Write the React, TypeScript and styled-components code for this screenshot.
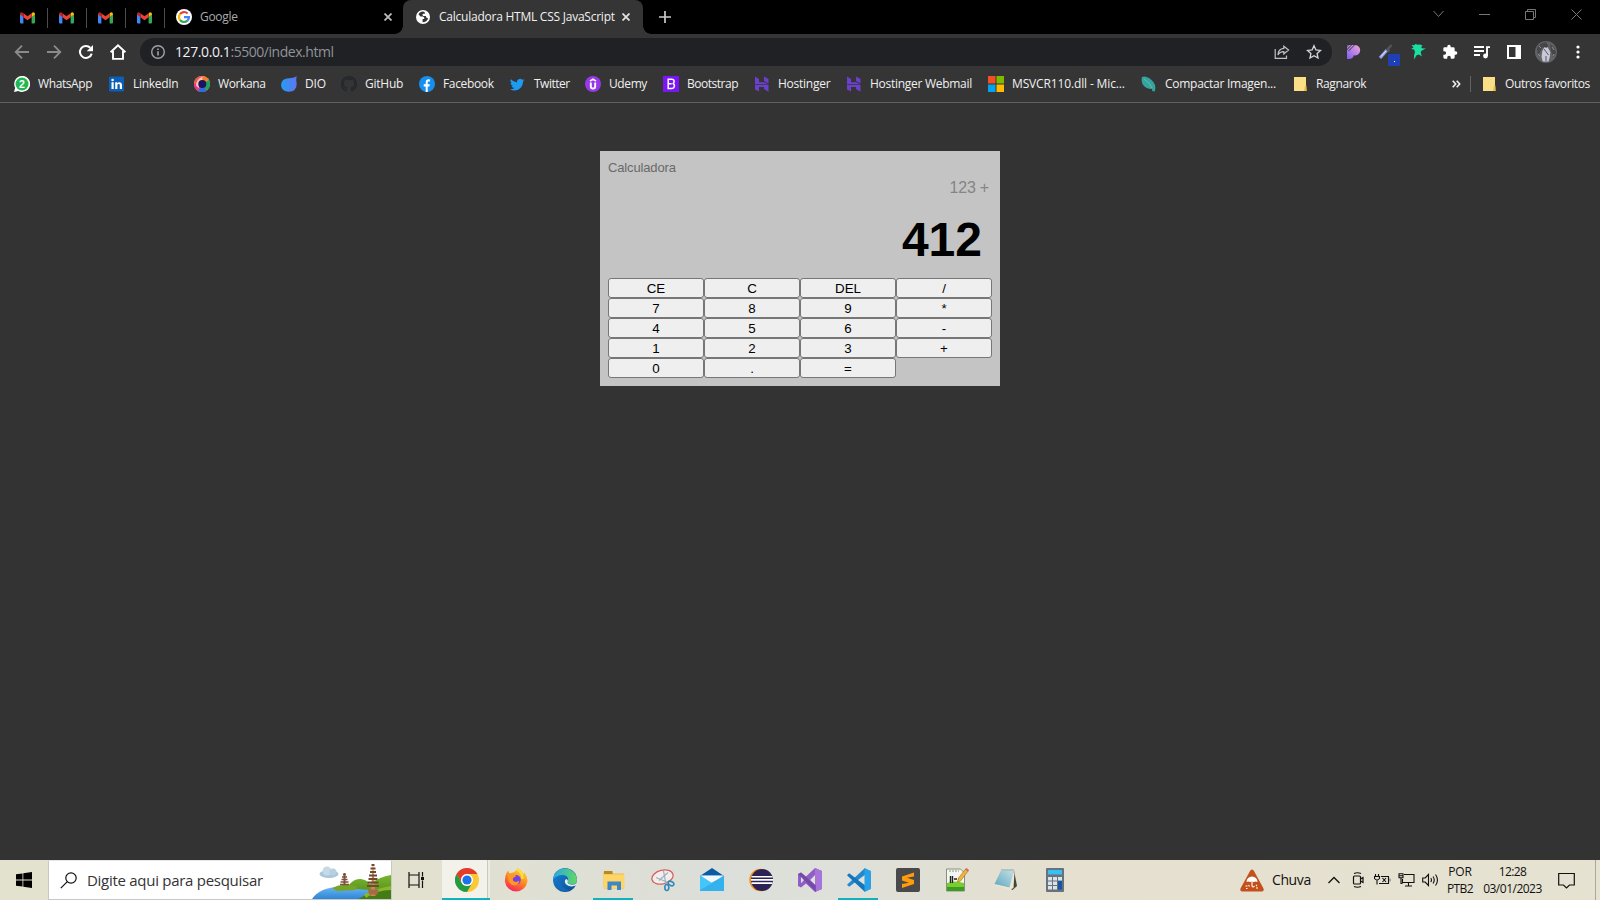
import React from "react";
import styled, { createGlobalStyle } from "styled-components";

const UI = `"Open Sans", "Noto Sans", sans-serif`;

const GlobalStyle = createGlobalStyle`
  * { box-sizing: border-box; }
  html, body { margin: 0; padding: 0; overflow: hidden; background: #333333; }
  svg { display: block; flex: none; }
`;

const Screen = styled.div`
  width: 1600px;
  height: 900px;
  display: flex;
  flex-direction: column;
  overflow: hidden;
  font-family: ${UI};
`;

/* ---------- browser: tabs ---------- */
const TabStrip = styled.div`
  height: 34px;
  flex: none;
  display: flex;
  background: #000;
`;
const PinnedTabs = styled.div`
  display: flex;
  padding-left: 9px;
`;
const PinnedTab = styled.div`
  width: 39px;
  height: 20px;
  margin-top: 8px;
  padding: 0 1px 1px 0;
  display: flex;
  align-items: center;
  justify-content: center;
  border-right: 1px solid #4c4c4c;
`;
const Tab = styled.div<{ $width: number; $active?: boolean }>`
  width: ${p => p.$width}px;
  height: 34px;
  display: flex;
  align-items: center;
  position: relative;
  padding-left: ${p => (p.$active ? 12 : 11)}px;
  color: ${p => (p.$active ? "#f1f1f1" : "#a9abae")};
  background: ${p => (p.$active ? "#353535" : "transparent")};
  border-radius: 8px 8px 0 0;
  &::before, &::after {
    content: "";
    display: ${p => (p.$active ? "block" : "none")};
    position: absolute;
    bottom: 0;
    width: 8px;
    height: 8px;
  }
  &::before { left: -8px; background: radial-gradient(circle at 0 0, transparent 7.5px, #353535 8px); }
  &::after { right: -8px; background: radial-gradient(circle at 100% 0, transparent 7.5px, #353535 8px); }
`;
const Label = styled.span<{ $ls?: number; $size?: number }>`
  font-size: ${p => p.$size ?? 12}px;
  letter-spacing: ${p => p.$ls ?? 0}px;
  line-height: 16px;
  white-space: nowrap;
`;
const TabTitle = styled(Label)`
  flex: 1;
  margin-left: 8px;
`;
const TabClose = styled.div<{ $width?: number }>`
  width: ${p => p.$width ?? 31}px;
  padding-right: ${p => (p.$width ? 6 : 0)}px;
  display: flex;
  justify-content: center;
`;
const NewTab = styled.div`
  width: 44px;
  display: flex;
  align-items: center;
  justify-content: center;
`;
const WindowControls = styled.div`
  margin-left: auto;
  padding-right: 1px;
  display: flex;
`;
const WindowButton = styled.div`
  width: 46px;
  height: 28px;
  display: flex;
  align-items: center;
  justify-content: center;
`;

/* ---------- browser: toolbar ---------- */
const Toolbar = styled.div`
  height: 36px;
  flex: none;
  display: flex;
  align-items: center;
  padding: 0 6px;
  background: #353535;
`;
const ToolButton = styled.div<{ $width?: number }>`
  width: ${p => p.$width ?? 32}px;
  height: 32px;
  display: flex;
  align-items: center;
  justify-content: center;
  position: relative;
`;
const AddressBar = styled.div`
  width: 1192px;
  height: 28px;
  margin: 0 6px;
  border-radius: 14px;
  background: #202124;
  display: flex;
  align-items: center;
  padding: 0 2px 0 10px;
`;
const Host = styled(Label)`
  margin-left: 9px;
  color: #f0f0f0;
`;
const Path = styled(Label)`
  flex: 1;
  color: #919498;
`;
const BlueBadge = styled.div`
  position: absolute;
  right: 2px;
  bottom: 2px;
  width: 12px;
  height: 12px;
  border-radius: 1px;
  background: #1f3fb4;
  display: flex;
  align-items: center;
  justify-content: center;
  &::after { content: ""; width: 1px; height: 1px; background: #fff; margin-top: 3px; }
`;

/* ---------- browser: bookmarks ---------- */
const BookmarkBar = styled.div`
  height: 33px;
  flex: none;
  display: flex;
  padding: 0 0 3px 14px;
  background: #353535;
  border-bottom: 1px solid #606160;
  color: #f0f0f0;
`;
const Bookmark = styled.div<{ $width: number }>`
  width: ${p => p.$width}px;
  height: 28px;
  display: flex;
  align-items: center;
  gap: 8px;
`;
const BarDivider = styled.div`
  width: 1px;
  height: 16px;
  margin: 6px 11px 0 6px;
  background: #606366;
`;
const Overflow = styled.div`
  width: 16px;
  height: 28px;
  margin-left: auto;
  display: flex;
  align-items: center;
  justify-content: center;
`;

/* ---------- calculator ---------- */
const Page = styled.main`
  flex: 1;
  display: flex;
  justify-content: center;
  align-items: flex-start;
  padding-top: 48px;
  background: #333333;
`;
const Calculator = styled.section`
  width: 400px;
  height: 235px;
  padding: 8px;
  background: #c4c4c4;
  font-family: "Liberation Sans", Arial, sans-serif;
`;
const CalcTitle = styled.div`
  height: 17px;
  line-height: 18px;
  font-size: 13px;
  letter-spacing: -0.15px;
  color: #6a6a6a;
`;
const Previous = styled.div`
  height: 24px;
  line-height: 24px;
  padding-right: 3px;
  text-align: right;
  font-size: 16px;
  letter-spacing: -0.2px;
  color: #858585;
`;
const Current = styled.div`
  height: 78px;
  line-height: 79px;
  padding-right: 10px;
  text-align: right;
  font-size: 48px;
  font-weight: 700;
  color: #000;
`;
const Keys = styled.div`
  display: grid;
  grid-template-columns: repeat(4, 96px);
  grid-auto-rows: 20px;
`;
const Key = styled.button`
  margin: 0;
  padding: 1px 0 0;
  border: 1px solid #767676;
  border-radius: 3px;
  background: #efefef;
  color: #000;
  font: 13.333px/17px "Liberation Sans", Arial, sans-serif;
`;

/* ---------- taskbar ---------- */
const Taskbar = styled.footer`
  height: 40px;
  flex: none;
  display: flex;
  background: linear-gradient(90deg, #e3e2cf 0, #e2e1d0 420px, #dcdfd9 700px, #dee0da 830px, #e5e0cf 1060px, #e6e2d1 1600px);
  color: #111;
`;
const Start = styled.div`
  width: 48px;
  display: flex;
  align-items: center;
  justify-content: center;
`;
const Search = styled.div`
  width: 344px;
  display: flex;
  align-items: center;
  padding-left: 11px;
  background: #fff;
  border: 1px solid #c9c9c4;
  border-top-color: #e6e6e2;
`;
const SearchText = styled(Label)`
  flex: 1;
  margin-left: 10px;
  color: #333;
`;
const TaskView = styled.div`
  width: 50px;
  padding-right: 1px;
  display: flex;
  align-items: center;
  justify-content: center;
`;
const AppTile = styled.div<{ $running?: boolean; $focused?: boolean }>`
  width: 49px;
  height: 40px;
  display: flex;
  align-items: center;
  justify-content: center;
  position: relative;
  background: ${p => (p.$focused ? "linear-gradient(90deg, #f3f2ea 45px, #c9c9c0 45px, #c9c9c0 46px, #eeece2 46px, #eeece2 48px, transparent 48px)" : "none")};
  &::after {
    content: "";
    position: absolute;
    bottom: 0;
    left: ${p => (p.$focused ? 0 : 4)}px;
    width: ${p => (p.$focused ? 48 : 40)}px;
    height: 2px;
    background: ${p => (p.$running ? "#13b1bb" : "transparent")};
  }
`;
const Tray = styled.div`
  margin-left: auto;
  display: flex;
  align-items: center;
`;
const Weather = styled.div`
  display: flex;
  align-items: center;
  gap: 8px;
  width: 82px;
`;
const TrayIcon = styled.div`
  width: 24px;
  display: flex;
  justify-content: center;
`;
const Notifications = styled.div`
  width: 48px;
  padding-left: 11px;
`;
const TwoLines = styled.div<{ $width: number }>`
  width: ${p => p.$width}px;
  display: flex;
  flex-direction: column;
  align-items: center;
  gap: 1px;
`;
const ShowDesktop = styled.div`
  width: 5px;
  height: 40px;
  border-left: 1px solid #aaa89c;
`;

/* ---------- drawings ---------- */
const Gmail = () => (
  <svg width="15" height="12" viewBox="0 0 15 12">
    <path d="M0 2v8.6Q0 11.5 1 11.5h2.4V4.7L1.5 1Z" fill="#4285f4" />
    <path d="M11.6 4.7v6.8H14q1 0 1-.9V2l-1.5-1Z" fill="#34a853" />
    <path d="M11.6 1.2v3.6L15 2.4Q15 .2 13 .3Z" fill="#fbbc04" />
    <path d="M3.4 1.2v4l4.1 3.1 4.1-3.1v-4L7.5 4.3Z" fill="#ea4335" />
    <path d="M0 2.4 3.4 5V1.2L2 .3Q0 .2 0 2.4" fill="#c5221f" />
  </svg>
);
const GoogleG = () => (
  <svg width="16" height="16" viewBox="0 0 16 16">
    <circle cx="8" cy="8" r="8" fill="#fff" />
    <g fill="none" strokeWidth="2.2">
      <path d="M4 5.1A5 5 0 0 1 11.6 4.5" stroke="#ea4335" />
      <path d="M4 11A5 5 0 0 1 4 5.1" stroke="#fbbc05" />
      <path d="M11.5 11.6A5 5 0 0 1 4 11" stroke="#34a853" />
      <path d="M8 8.1h5A5 5 0 0 1 11.5 11.6" stroke="#4285f4" />
    </g>
  </svg>
);
const Cross = ({ color }: { color: string }) => (
  <svg width="8" height="8" viewBox="0 0 8 8"><path d="M.5.5l7 7M7.5.5l-7 7" stroke={color} strokeWidth="1.8" /></svg>
);
const Globe = () => (
  <svg width="16" height="16" viewBox="0 0 16 16">
    <circle cx="8" cy="8" r="7" fill="#fff" />
    <path d="M8 2.600c-1.900.1-3.600 1.100-4.500 2.700L5.500 7.400h2.400l1.300 1.200v1.300H7.600v3.400c2.500.1 4.800-1.400 5.500-3.800L11 8.200V6.900H8.300L7.200 5.700l1.100-1h1.500L9.800 3.200Z" fill="#353535" />
  </svg>
);
const Back = ({ flip }: { flip?: boolean }) => (
  <svg width="16" height="16" viewBox="0 0 16 16" fill="none" stroke="#8b8b8b" strokeWidth="1.8" transform={flip ? "scale(-1 1)" : undefined}>
    <path d="M15 8H2.300M8 1.700 1.700 8 8 14.300" />
  </svg>
);
const Reload = () => (
  <svg width="16" height="16" viewBox="0 0 16 16">
    <path d="M13.700 9.600A6 6 0 1 1 12.300 3.800" fill="none" stroke="#fff" strokeWidth="2" />
    <path d="M15 .9v6.300H8.700Z" fill="#fff" />
  </svg>
);
const Home = () => (
  <svg width="18" height="18" viewBox="0 0 18 18" fill="none" stroke="#fff" strokeWidth="1.900">
    <path d="M1.600 9.200 9 2.200l7.400 7M4 8v7.900h10V8" />
  </svg>
);
const Info = () => (
  <svg width="16" height="16" viewBox="0 0 16 16"><circle cx="8" cy="8" r="6.300" fill="none" stroke="#a0a3a7" strokeWidth="1.400" /><path d="M7.200 7.200h1.600v4.200H7.200zM7.200 4.500h1.600v1.600H7.200z" fill="#a0a3a7" /></svg>
);
const Share = () => (
  <svg width="16" height="16" viewBox="0 0 16 16" fill="none" stroke="#bfc2c5" strokeWidth="1.200">
    <path d="M1.200 5v9.300h11.300V11.500" /><path d="M9.800 2.200 14.600 6 9.800 9.900V7.700C7 7.700 5 8.900 4 11c.1-4 2.300-6.300 5.800-6.600Z" />
  </svg>
);
const Star = () => (
  <svg width="16" height="16" viewBox="0 0 16 16" fill="none" stroke="#d5d7d9" strokeWidth="1.300">
    <path d="m8 1.700 1.900 4.200 4.600.5-3.400 3.100.9 4.500L8 11.700 4 14l.9-4.500L1.500 6.400l4.600-.5Z" />
  </svg>
);
const PurpleP = () => (
  <svg width="16" height="16" viewBox="0 0 16 16">
    <defs><linearGradient id="pp" x1="0" y1="1" x2="1" y2="0"><stop offset="0" stopColor="#7d5df5" /><stop offset="1" stopColor="#f2a5d8" /></linearGradient></defs>
    <path d="M1 1h8a6 5.300 0 0 1 0 10.500H7.300V13q-1.500 2-4.300 2H1Z" fill="url(#pp)" />
    <path d="M0 6.500 6 .5M2.500 7 9 .5M0 3.500 3 .5" stroke="#353535" strokeWidth="1" />
  </svg>
);
const Picker = () => (
  <svg width="16" height="16" viewBox="0 0 16 16">
    <path d="M2 14 9 6" stroke="#8ca1e8" strokeWidth="3.200" /><path d="M3 12.500 8 7" stroke="#dfe5ff" strokeWidth="1" /><path d="m8.500 4.500 3 3M9.500 5.500 13.500 1" stroke="#52565c" strokeWidth="2.500" />
  </svg>
);
const GreenBird = () => (
  <svg width="16" height="18" viewBox="0 0 16 18">
    <path d="M1.500 2 4 2.300 5.500 1l2.500.800 2-.300 2.500 1L11.300 4l.5 1.300 4 .200-3.800 2-1.300 1.200 1 4.800-2.700-2-2.500.800-1.500 2.700-.800 1.500L4 12.500 5 9 4 6.500 1 6l2.500-1.500Z" fill="#19dfa0" />
  </svg>
);
const Puzzle = () => (
  <svg width="16" height="16" viewBox="0 0 24 24"><path fill="#fff" d="M20.500 11H19V7a2 2 0 0 0-2-2h-4V3.500a2.500 2.500 0 0 0-5 0V5H4a2 2 0 0 0-2 2v3.800h1.500a2.700 2.700 0 0 1 0 5.400H2V20a2 2 0 0 0 2 2h3.800v-1.500a2.700 2.700 0 0 1 5.400 0V22H17a2 2 0 0 0 2-2v-4h1.500a2.500 2.500 0 0 0 0-5Z" /></svg>
);
const Music = () => (
  <svg width="18" height="16" viewBox="0 0 18 16"><path d="M1 3h10M1 7h10M1 11h6" stroke="#fff" strokeWidth="1.800" /><path d="M14 12V3.100h3" fill="none" stroke="#fff" strokeWidth="1.900" /><circle cx="12.500" cy="12" r="2.400" fill="#fff" /></svg>
);
const SidePanel = () => (
  <svg width="14" height="14" viewBox="0 0 14 14"><path fill="#fff" fillRule="evenodd" d="M0 0h14v14H0zM2 2v10h6.500V2z" /></svg>
);
const Avatar = () => (
  <svg width="22" height="22" viewBox="0 0 22 22">
    <circle cx="11" cy="11" r="11" fill="#606266" />
    <path d="M2 7Q6 1 11 1l2 4-6 2-4 8ZM15 3q5 3 6 9l-3 4-2-6Z" fill="#45474b" />
    <path d="M4 5l2 2M17 6l2 3M3 13l2 2M18 15l1-2" stroke="#8f9195" />
    <path d="M9.500 6h3l2.800 5-.5 5-1.300 4.500H7.800L6.500 16l.8-6Z" fill="#c9c7d8" />
    <circle cx="11" cy="5" r="1.800" fill="#4c3d40" />
    <path d="m9 8 4.500 6M11 15v5" stroke="#5d5560" strokeWidth="1" />
  </svg>
);
const Dots = () => (
  <svg width="4" height="16" viewBox="0 0 4 16" fill="#fff"><circle cx="2" cy="3" r="1.600" /><circle cx="2" cy="8" r="1.600" /><circle cx="2" cy="13" r="1.600" /></svg>
);

const I16 = ({ children }: { children: React.ReactNode }) => <svg width="16" height="16" viewBox="0 0 16 16">{children}</svg>;
const GlyphText = styled.text`
  font-family: "Liberation Sans", Arial, sans-serif;
  font-weight: 700;
  text-anchor: middle;
`;
const WhatsApp = () => (
  <I16><path d="M0 16 1.200 11.800A8 8 0 1 1 4.300 14.900Z" fill="#fff" /><circle cx="8" cy="8" r="6.500" fill="#20b850" /><GlyphText x="8" y="11.700" fontSize="10.500" fill="#fff">2</GlyphText></I16>
);
const LinkedIn = () => (
  <I16><rect x="0" y=".5" width="15" height="15" rx="1" fill="#0b5fb5" /><path d="M2.500 6.300h2.200v6.700H2.500zM6.200 6.300h2.100v1c1-1.700 4.700-1.700 4.700 1.700v4h-2.200V9.500c0-2-2.400-1.800-2.400 0V13H6.200z" fill="#fff" /><circle cx="3.600" cy="4" r="1.300" fill="#fff" /></I16>
);
const Workana = () => (
  <I16>
    <circle cx="8" cy="8" r="8" fill="#f9a63c" />
    <path d="M8 0a8 8 0 0 1 7 4L9 6Z" fill="#f57a2e" />
    <path d="M8 8l7-4A8 8 0 0 1 13 14.200Z" fill="#22a05e" />
    <path d="M8 8l5 6.200A8 8 0 0 1 4 15Z" fill="#2d6be0" />
    <path d="M8 8 4 15A8 8 0 0 1 0 8Z" fill="#e8368f" />
    <path d="M0 8A8 8 0 0 1 8 0L7 8Z" fill="#f0584e" />
    <path d="M8.500.5Q2.500 3 2 9.500L4.500 12 8 4.500Z" fill="#fbc3c6" />
    <circle cx="8.300" cy="8" r="4" fill="#1b1459" />
  </I16>
);
const Dio = () => (
  <I16><defs><linearGradient id="dio"><stop offset="0" stopColor="#249df2" /><stop offset="1" stopColor="#6075f0" /></linearGradient></defs><path d="M15.800.3q-1 3-.2 6.500.8 8.400-7.800 8.900Q.500 15.500 0 9q.3-6.500 8-6.800 4.500 0 7.800-1.900" fill="url(#dio)" /></I16>
);
const GitHub = () => (
  <I16><path fill="#25282c" d="M8 0c4.420 0 8 3.580 8 8a8.013 8.013 0 0 1-5.450 7.590c-.4.080-.55-.17-.55-.38 0-.27.010-1.130.010-2.200 0-.75-.25-1.230-.54-1.480 1.780-.2 3.650-.88 3.650-3.950 0-.88-.31-1.590-.82-2.150.080-.2.360-1.020-.080-2.120 0 0-.67-.22-2.200.82-.64-.18-1.320-.27-2-.27-.68 0-1.360.090-2 .27-1.530-1.030-2.200-.82-2.200-.82-.44 1.100-.16 1.920-.080 2.120-.51.560-.82 1.280-.82 2.150 0 3.060 1.860 3.750 3.640 3.950-.23.200-.44.550-.51 1.070-.46.210-1.610.550-2.330-.66-.15-.24-.6-.83-1.230-.82-.67.010-.27.380.010.530.340.190.730.900.820 1.130.160.450.680 1.310 2.690.940 0 .670.010 1.300.010 1.490 0 .210-.15.450-.55.380A7.995 7.995 0 0 1 0 8c0-4.420 3.580-8 8-8Z" /></I16>
);
const Facebook = () => (
  <I16><circle cx="8" cy="8" r="8" fill="#1590f0" /><path d="M6.700 16v-5.500h-2V8.200h2V6.400c0-2.300 1.300-3.400 4.200-3v2H9.700c-1 0-1 .5-1 1v1.800h2.100l-.4 2.300H8.700V16" fill="#fff" /></I16>
);
const Twitter = () => (
  <I16><path fill="#1d9bf0" transform="translate(0 1) scale(.9)" d="M5.026 15c6.038 0 9.341-5.003 9.341-9.334 0-.14 0-.282-.006-.422A6.685 6.685 0 0 0 16 3.542a6.658 6.658 0 0 1-1.889.518 3.301 3.301 0 0 0 1.447-1.817 6.533 6.533 0 0 1-2.087.793A3.286 3.286 0 0 0 7.875 6.030a9.325 9.325 0 0 1-6.767-3.429 3.289 3.289 0 0 0 1.018 4.382A3.323 3.323 0 0 1 .640 6.575v.045a3.288 3.288 0 0 0 2.632 3.218 3.203 3.203 0 0 1-.865.115 3.230 3.230 0 0 1-.614-.057 3.283 3.283 0 0 0 3.067 2.277A6.588 6.588 0 0 1 .780 13.580a6.320 6.320 0 0 1-.780-.045A9.344 9.344 0 0 0 5.026 15z" /></I16>
);
const Udemy = () => (
  <I16><circle cx="8" cy="8" r="8" fill="#9838e8" /><path d="M5 5.200 8 3.200l3 2" fill="none" stroke="#fff" strokeWidth="1.500" /><path d="M5.800 6.500v4c0 2.800 4.400 2.800 4.400 0v-4" fill="none" stroke="#fff" strokeWidth="1.900" /></I16>
);
const Bootstrap = () => (
  <I16><rect width="16" height="16" fill="#7a16f5" /><path d="M5.200 3.300h3.600c3 0 3 3.700.8 4.300 2.700.5 2.300 4.900-1 4.900H5.200Zm0 4.400h3.500" fill="none" stroke="#fff" strokeWidth="1.500" /></I16>
);
const Hostinger = () => (
  <I16><path d="M1 .5 5 3v3.200h5.300l3.700 2H1ZM10 .500l4.500 2.500v4.500L10 5ZM1 8.500 5 11l0 4.500L1 13.500ZM1 9h9.500V9L14.500 8.800v7L10 13v-2H5Z" fill="#6b40cc" /></I16>
);
const Microsoft = () => (
  <I16><path d="M0 0h7.500v7.500H0z" fill="#f25022" /><path d="M8.500 0H16v7.500H8.500z" fill="#7fba00" /><path d="M0 8.500h7.500V16H0z" fill="#00a4ef" /><path d="M8.500 8.500H16V16H8.500z" fill="#ffb900" /></I16>
);
const Compress = () => (
  <I16><path d="M1 1q3-1.500 7 1 6 4 6.300 9 .2 3-.8 4.500l-2.500-.5.3-2Q4 13 1.500 8 0 4.500 1 1" fill="#35a39e" /><path d="M3 3q6 4 8 9" stroke="#62bdb7" fill="none" /></I16>
);
const Folder = () => (
  <svg width="15" height="16" viewBox="0 0 15 16"><path d="M1 1h12v9.500l.500 4.500H1Z" fill="#fbdf86" /><path d="M12 9.500h1.500V15H11Z" fill="#e9bd4a" /></svg>
);

const bookmarks: { label: string; width: number; ls: number; icon: React.ReactNode }[] = [
  { label: "WhatsApp", width: 95, ls: -0.4, icon: <WhatsApp /> },
  { label: "LinkedIn", width: 85, ls: -0.3, icon: <LinkedIn /> },
  { label: "Workana", width: 87, ls: -0.4, icon: <Workana /> },
  { label: "DIO", width: 60, ls: -0.2, icon: <Dio /> },
  { label: "GitHub", width: 78, ls: -0.25, icon: <GitHub /> },
  { label: "Facebook", width: 91, ls: -0.35, icon: <Facebook /> },
  { label: "Twitter", width: 75, ls: -0.5, icon: <Twitter /> },
  { label: "Udemy", width: 78, ls: -0.4, icon: <Udemy /> },
  { label: "Bootstrap", width: 91, ls: -0.48, icon: <Bootstrap /> },
  { label: "Hostinger", width: 92, ls: -0.25, icon: <Hostinger /> },
  { label: "Hostinger Webmail", width: 142, ls: -0.28, icon: <Hostinger /> },
  { label: "MSVCR110.dll - Mic...", width: 153, ls: -0.14, icon: <Microsoft /> },
  { label: "Compactar Imagen...", width: 152, ls: -0.26, icon: <Compress /> },
  { label: "Ragnarok", width: 90, ls: -0.35, icon: <Folder /> },
];

const I24 = ({ children }: { children: React.ReactNode }) => <svg width="24" height="24" viewBox="0 0 24 24">{children}</svg>;
const Chrome = () => (
  <I24>
    <circle cx="12" cy="12" r="12" fill="#fcc934" />
    <path d="M1.600 6A12 12 0 0 1 22.400 6H12A6 6 0 0 0 6.800 15Z" fill="#e33b2e" />
    <path d="M1.600 6A12 12 0 0 0 12 24l5.200-9A6 6 0 0 1 6.800 15Z" fill="#229a48" />
    <circle cx="12" cy="12" r="6" fill="#fff" /><circle cx="12" cy="12" r="4.600" fill="#1a73e8" />
  </I24>
);
const Firefox = () => (
  <I24>
    <defs><linearGradient id="ff" x1=".8" y1="0" x2=".3" y2="1"><stop offset="0" stopColor="#ffe040" /><stop offset=".5" stopColor="#ff8a1e" /><stop offset="1" stopColor="#f4225f" /></linearGradient></defs>
    <path d="M13.500 0q5 2.500 5.500 6l1.500-1.500Q24 9 23.300 14A11.300 11.300 0 0 1 1 14Q.500 9 2.500 5L4 2.500l1.500 3L9 4.500q3-1 4.500-4.500" fill="url(#ff)" />
    <circle cx="12" cy="11.800" r="4.800" fill="#7543e3" />
    <path d="M3.500 5.500 9 6q3 .5 3 2.200L9.500 9.700Q8 11 9.500 13q3 2 5.500-.500 0 4.500-4.500 5Q4.500 16.500 4 10Z" fill="#ff9725" />
    <path d="M13 1q6 4 5.500 10" stroke="#ffdf3e" strokeWidth="2.500" fill="none" />
  </I24>
);
const Edge = () => (
  <I24>
    <defs>
      <linearGradient id="e1" x1="0" x2="1"><stop offset="0" stopColor="#28a7e5" /><stop offset="1" stopColor="#62d863" /></linearGradient>
      <linearGradient id="e2" x1="0" y1="0" x2="1" y2="1"><stop offset="0" stopColor="#1588dc" /><stop offset="1" stopColor="#0d4690" /></linearGradient>
    </defs>
    <circle cx="12" cy="12" r="12" fill="url(#e2)" />
    <path d="M.100 11.500A12 12 0 0 1 24 11.500q0 5-5.500 5-4.500-.5-3.500-3.300Q16 8 10.500 7 4 6.500.100 11.500" fill="url(#e1)" />
    <path d="M13.200 11q-2.500 2-.5 5 3.300 3.800 9.300 1.800l1.500-.800L24 12q0 5-5.500 4.700-5-.2-3.600-3.600 0-1.800-1.700-2.100" fill="#e6efed" />
    <path d="M8.500 11q-2.500 8 7 11.300Q9 24.500 4 20 .500 13.500 8.500 11" fill="#166bb8" />
  </I24>
);
const Explorer = () => (
  <I24>
    <path d="M1.500 3.500h8l2 2H22v15H1.500z" fill="#f0bf45" /><path d="M1.500 6.500h21V20h-21z" fill="#fdd568" /><path d="M2 3h8.500v3H2z" fill="#b68a1d" />
    <path d="M5.500 13.500h13.500V22h-4v-4.500h-5.500V22h-4z" fill="#3c87c4" />
  </I24>
);
const Snip = () => (
  <I24>
    <ellipse cx="11.500" cy="9" rx="10.800" ry="6.800" transform="rotate(-14 11.500 9)" fill="#f3eeec" stroke="#d9615e" strokeWidth="1.300" />
    <path d="M12.500 3 15 16M5 9.500l12 5M8 12.500l9-8" stroke="#9ab3c2" strokeWidth="1.300" />
    <ellipse cx="20" cy="15.500" rx="3" ry="2" transform="rotate(28 20 15.500)" fill="none" stroke="#3289b8" strokeWidth="1.600" />
    <ellipse cx="15.800" cy="19.500" rx="2" ry="3" fill="none" stroke="#3289b8" strokeWidth="1.600" />
  </I24>
);
const Mail = () => (
  <I24><path d="M0 8 12 0l12 8v4H0Z" fill="#0c59a4" /><path d="M0 7.500h24V23H0z" fill="#2a9fe3" /><path d="M0 7.500h24L12 15.500Z" fill="#f3f6f8" /><path d="m0 23 12-8.500L24 8v15Z" fill="#34b2ee" /><path d="M0 7.500v15L12 15Z" fill="#45c5f8" /></I24>
);
const Eclipse = () => (
  <I24><circle cx="11.500" cy="12" r="11.300" fill="#f7941e" /><circle cx="13" cy="12" r="11" fill="#2c2255" /><path d="M2.500 8.700h21M2 11.900h22M2.500 15.100h21" stroke="#fff" strokeWidth="1.600" /></I24>
);
const VisualStudio = () => (
  <I24><path d="m17 0 7 3v18l-7 3L8 15.500l-5 4L0 18V6l3-1.500 5 4ZM17 7l-5 5 5 5ZM3 8.800v6.400L6 12Z" fill="#8f5ec6" fillRule="evenodd" /><path d="m17 0 7 3v18l-7 3Z" fill="#a974da" /><path d="M0 6 3 4.500 18 17.500V24Z" fill="#6c409f" opacity=".7" /></I24>
);
const VsCode = () => (
  <I24><path d="M18 0 0 16.700l2.200 2L18 6.700Z" fill="#2289d0" /><path d="M18 24 0 7.300l2.200-2L18 17.300Z" fill="#1375bd" /><path d="m17.500 0 6.500 3v18l-6.500 3Z" fill="#29a0e8" /></I24>
);
const Sublime = () => (
  <I24><rect width="24" height="24" rx="2" fill="#494949" /><path d="m18 4.500-12 4v4l7 2.200L6 16v4l12-4v-4L11 9.800 18 8.500Z" fill="#ff9c0c" /></I24>
);
const NotepadPlus = () => (
  <I24>
    <path d="M1.500 1h14l4 4v18h-18z" fill="#f4f7ef" stroke="#85907e" /><path d="M2 15q8-3 17 0v8H2Z" fill="#76cf2c" /><path d="M2 19h17v4H2z" fill="#3f9a24" />
    <path d="M4 3h10" stroke="#8a918a" strokeDasharray="2 1" /><path d="M5.500 8v7M7.500 8v7M9 11h3M13 11h3" stroke="#222" strokeWidth="1.400" />
    <path d="m12.500 14 1-4L21 .5l2.500 2L15.500 13Z" fill="#f2b43e" stroke="#9d6d1d" strokeWidth=".6" /><path d="m20 1.500 2.800 2.200L24 2 21.500 0Z" fill="#d86d5c" />
  </I24>
);
const Notepad = () => (
  <I24>
    <defs><linearGradient id="np" x1="1" y1="0" x2="0" y2="1"><stop offset="0" stopColor="#c3e2e8" /><stop offset="1" stopColor="#5fa6bd" /></linearGradient></defs>
    <path d="M20 2.500 23 18l-4.500 4-3-2Z" fill="#45443e" /><path d="m1 17 14.500 5 4-2L20.500 4Z" fill="#ece6d3" /><path d="M7 2.500 20 2l-4.500 17.500L.500 16Z" fill="url(#np)" /><path d="M7 2h13" stroke="#aeb9b6" strokeWidth="1.500" />
  </I24>
);
const CalcApp = () => (
  <I24>
    <rect x="3" width="18" height="24" rx="1" fill="#66727c" /><path d="M5 2h14v4.500H5z" fill="#38bff4" />
    <path d="M5 9h4v3.500H5zM10 9h4v3.500h-4zM5 13.500h4V17H5zM10 13.500h4V17h-4zM5 18h4v3.500H5zM10 18h4v3.500h-4zM15 9h4v3.500h-4z" fill="#dce2e7" /><path d="M15 13h4v8.500h-4z" fill="#1557a3" />
  </I24>
);
const Scenery = () => (
  <svg width="79" height="38" viewBox="0 0 79 38">
    <defs>
      <linearGradient id="lake" x1="0" y1="0" x2="0" y2="1"><stop offset="0" stopColor="#68b5ef" /><stop offset="1" stopColor="#2f86d6" /></linearGradient>
      <linearGradient id="hill" x1="0" y1="0" x2="0" y2="1"><stop offset="0" stopColor="#79b52c" /><stop offset="1" stopColor="#4b8418" /></linearGradient>
    </defs>
    <path d="M0 38q8-12 28-12l34 2v10Z" fill="url(#lake)" />
    <ellipse cx="17" cy="13" rx="9.500" ry="4" fill="#a9c6da" /><circle cx="15" cy="10" r="4.500" fill="#c5d9e6" /><circle cx="21" cy="11" r="3.500" fill="#b7cfdf" />
    <path d="M36 25q6-8 13-7 6 1 9 5 9-7 21-9v24H60l-2-9-14-1Z" fill="url(#hill)" /><path d="M20 27q8-4 16-3l9 1-2 4-18 1Z" fill="#76a526" />
    <path d="M48 37q14-8 31-10v11H46Z" fill="#437b15" /><path d="M52 33q14-6 27-8v4q-14 0-25 8Z" fill="#8ab52d" />
    <path d="M31.500 12h2v12h-2z" fill="#8a5a33" /><path d="M31 13.500h3M30 16h5M29.500 18.500h6M28.500 21h8M28 23.500h9" stroke="#7b503c" strokeWidth="1.500" />
    <path d="m61 2 2.500 33h-5Z" fill="#c08a52" /><path d="M59.500 4h3M58.500 7.500h5M58 11h6M57 14.500h8M56.500 18h9M55.500 21.500h11M55 25h12" stroke="#74492f" strokeWidth="1.800" /><path d="M56 28.500h10.500l-1 5H57Z" fill="#a76a44" />
  </svg>
);
const Triangle = () => (
  <svg width="24" height="23" viewBox="0 0 24 23">
    <path d="M12 .5q1.300 0 2 1.500l9.500 17.500q.8 2.800-1.500 3H2Q-.300 22.300.500 19.500L10 2Q10.700.5 12 .500" fill="#c4501b" />
    <path d="M6.500 13a5.500 5.500 0 0 1 11 0l-2-.5-1.500.5-2-.5-2 .5-1.500-.5Z" fill="#fff" /><path d="M12 12v5q1 2 2.500 0M5.500 17h2M8.500 16l1 1.500M16 16l1 1M6 19.500h1.500M16 19h2" stroke="#fff" strokeWidth="1.100" fill="none" />
  </svg>
);

const apps: { icon: React.ReactNode; running?: boolean; focused?: boolean }[] = [
  { icon: <Chrome />, running: true, focused: true },
  { icon: <Firefox /> },
  { icon: <Edge /> },
  { icon: <Explorer />, running: true },
  { icon: <Snip /> },
  { icon: <Mail /> },
  { icon: <Eclipse /> },
  { icon: <VisualStudio /> },
  { icon: <VsCode />, running: true },
  { icon: <Sublime /> },
  { icon: <NotepadPlus /> },
  { icon: <Notepad /> },
  { icon: <CalcApp /> },
];

const keys = ["CE", "C", "DEL", "/", "7", "8", "9", "*", "4", "5", "6", "-", "1", "2", "3", "+", "0", ".", "="];

export default function App() {
  return (
    <Screen>
      <GlobalStyle />
      <TabStrip>
        <PinnedTabs>
          {[0, 1, 2, 3].map(i => (
            <PinnedTab key={i}><Gmail /></PinnedTab>
          ))}
        </PinnedTabs>
        <Tab $width={238}>
          <GoogleG />
          <TabTitle $ls={-0.3}>Google</TabTitle>
          <TabClose><Cross color="#b9bbbd" /></TabClose>
        </Tab>
        <Tab $width={240} $active>
          <Globe />
          <TabTitle $ls={-0.24}>Calculadora HTML CSS JavaScript</TabTitle>
          <TabClose $width={32}><Cross color="#e0e0e0" /></TabClose>
        </Tab>
        <NewTab>
          <svg width="12" height="12" viewBox="0 0 12 12"><path d="M6 0v12M0 6h12" stroke="#c9cbcd" strokeWidth="1.700" /></svg>
        </NewTab>
        <WindowControls>
          <WindowButton><svg width="11" height="8" viewBox="0 0 11 8"><path d="m.5 1 5 5.500 5-5.500" fill="none" stroke="#777" /></svg></WindowButton>
          <WindowButton><svg width="11" height="11" viewBox="0 0 11 11"><path d="M0 5.500h11" stroke="#777" /></svg></WindowButton>
          <WindowButton><svg width="11" height="11" viewBox="0 0 11 11" fill="none" stroke="#777"><path d="M.5 2.500h8v8h-8zM2.500 2.500v-2h8v8h-2" /></svg></WindowButton>
          <WindowButton><svg width="11" height="11" viewBox="0 0 11 11"><path d="m.5.5 10 10m0-10-10 10" stroke="#777" /></svg></WindowButton>
        </WindowControls>
      </TabStrip>

      <Toolbar>
        <ToolButton><Back /></ToolButton>
        <ToolButton><Back flip /></ToolButton>
        <ToolButton><Reload /></ToolButton>
        <ToolButton><Home /></ToolButton>
        <AddressBar>
          <Info />
          <Host $size={14} $ls={-0.4}>127.0.0.1</Host>
          <Path $size={14} $ls={-0.46}>:5500/index.html</Path>
          <ToolButton><Share /></ToolButton>
          <ToolButton><Star /></ToolButton>
        </AddressBar>
        <ToolButton><PurpleP /></ToolButton>
        <ToolButton><Picker /><BlueBadge /></ToolButton>
        <ToolButton><GreenBird /></ToolButton>
        <ToolButton><Puzzle /></ToolButton>
        <ToolButton><Music /></ToolButton>
        <ToolButton><SidePanel /></ToolButton>
        <ToolButton><Avatar /></ToolButton>
        <ToolButton><Dots /></ToolButton>
      </Toolbar>

      <BookmarkBar>
        {bookmarks.map(b => (
          <Bookmark key={b.label} $width={b.width}>
            {b.icon}
            <Label $ls={b.ls}>{b.label}</Label>
          </Bookmark>
        ))}
        <Overflow>
          <svg width="9" height="8" viewBox="0 0 9 8"><path d="m.7.700 3 3.300-3 3.300M4.700.700l3 3.300-3 3.300" fill="none" stroke="#f0f0f0" strokeWidth="1.600" /></svg>
        </Overflow>
        <BarDivider />
        <Bookmark $width={118}>
          <Folder />
          <Label $ls={-0.38}>Outros favoritos</Label>
        </Bookmark>
      </BookmarkBar>

      <Page>
        <Calculator>
          <CalcTitle>Calculadora</CalcTitle>
          <Previous>123 +</Previous>
          <Current>412</Current>
          <Keys>
            {keys.map(k => (
              <Key key={k}>{k}</Key>
            ))}
          </Keys>
        </Calculator>
      </Page>

      <Taskbar>
        <Start>
          <svg width="16" height="16" viewBox="0 0 16 16"><path d="m0 2.300 6.500-.9v6.200H0zM7.300 1.300 16 0v7.600H7.300zM0 8.400h6.500v6.200L0 13.700zM7.300 8.400H16V16l-8.700-1.300z" fill="#000" /></svg>
        </Start>
        <Search>
          <svg width="17" height="17" viewBox="0 0 17 17" fill="none" stroke="#111" strokeWidth="1.200"><circle cx="11" cy="6" r="5.200" /><path d="M7.300 9.700.8 16.200" /></svg>
          <SearchText $size={15} $ls={-0.28}>Digite aqui para pesquisar</SearchText>
          <Scenery />
        </Search>
        <TaskView>
          <svg width="17" height="16" viewBox="0 0 17 16" fill="none" stroke="#111" strokeWidth="1.200"><path d="M1 0v3h10V0M1 16v-3h10v3M1 3v10M11 3v10M14.500 0v4.500M14.500 8.500V16" /><path d="M13 5h3v3h-3z" fill="#111" stroke="none" /></svg>
        </TaskView>
        {apps.map((a, i) => (
          <AppTile key={i} $running={a.running} $focused={a.focused}>{a.icon}</AppTile>
        ))}
        <Tray>
          <Weather><Triangle /><Label $size={14} $ls={-0.4}>Chuva</Label></Weather>
          <TrayIcon><svg width="12" height="8" viewBox="0 0 12 8"><path d="m.500 7 5.500-5.500L11.500 7" fill="none" stroke="#111" strokeWidth="1.300" /></svg></TrayIcon>
          <TrayIcon><svg width="12" height="16" viewBox="0 0 12 16" fill="none" stroke="#111" strokeWidth="1.200"><rect x="1.500" y="4" width="7" height="8" rx="1" /><path d="m8.500 7 2.500-1.500v5L8.500 9M2 1.500q3.500-1.500 7 0M2 14.500q3.500 1.500 7 0" /></svg></TrayIcon>
          <TrayIcon><svg width="17" height="12" viewBox="0 0 17 12" fill="none" stroke="#111" strokeWidth="1.100"><path d="M1.500 0v2.500M4.500 0v2.500M.5 2.500h5v2q-2.500 3-5 0zM3 6v4.500M7 2.500h7.500v7H5M8.500 4l3.500 4M12 4 8.500 8" /><path d="M16 4.500v3" stroke="#777" /></svg></TrayIcon>
          <TrayIcon><svg width="17" height="14" viewBox="0 0 17 14" fill="none" stroke="#111" strokeWidth="1.100"><path d="M6 1.500h10v8H4.500V6M7 13h7M10.500 9.500V13M1 .8h4v4H1zM3 5v5.500h1.500M1 2.800h4" /></svg></TrayIcon>
          <TrayIcon><svg width="17" height="14" viewBox="0 0 17 14" fill="none" stroke="#111" strokeWidth="1.100"><path d="M.7 5v4h2.500L6.500 12.500v-11L3.200 5ZM8.800 5q1.400 2 0 4M11 3.500q2.500 3.500 0 7M13.500 1.500q4 5.500 0 11" /></svg></TrayIcon>
          <TwoLines $width={36}><Label $ls={-0.2}>POR</Label><Label $ls={-0.6}>PTB2</Label></TwoLines>
          <TwoLines $width={69}><Label $ls={-0.6}>12:28</Label><Label $ls={-0.5}>03/01/2023</Label></TwoLines>
          <Notifications><svg width="17" height="17" viewBox="0 0 17 17"><path d="M.700 1.500h15.600v11.500h-4.800L8.500 16l-3-3H.700z" fill="none" stroke="#111" strokeWidth="1.200" /></svg></Notifications>
          <ShowDesktop />
        </Tray>
      </Taskbar>
    </Screen>
  );
}
